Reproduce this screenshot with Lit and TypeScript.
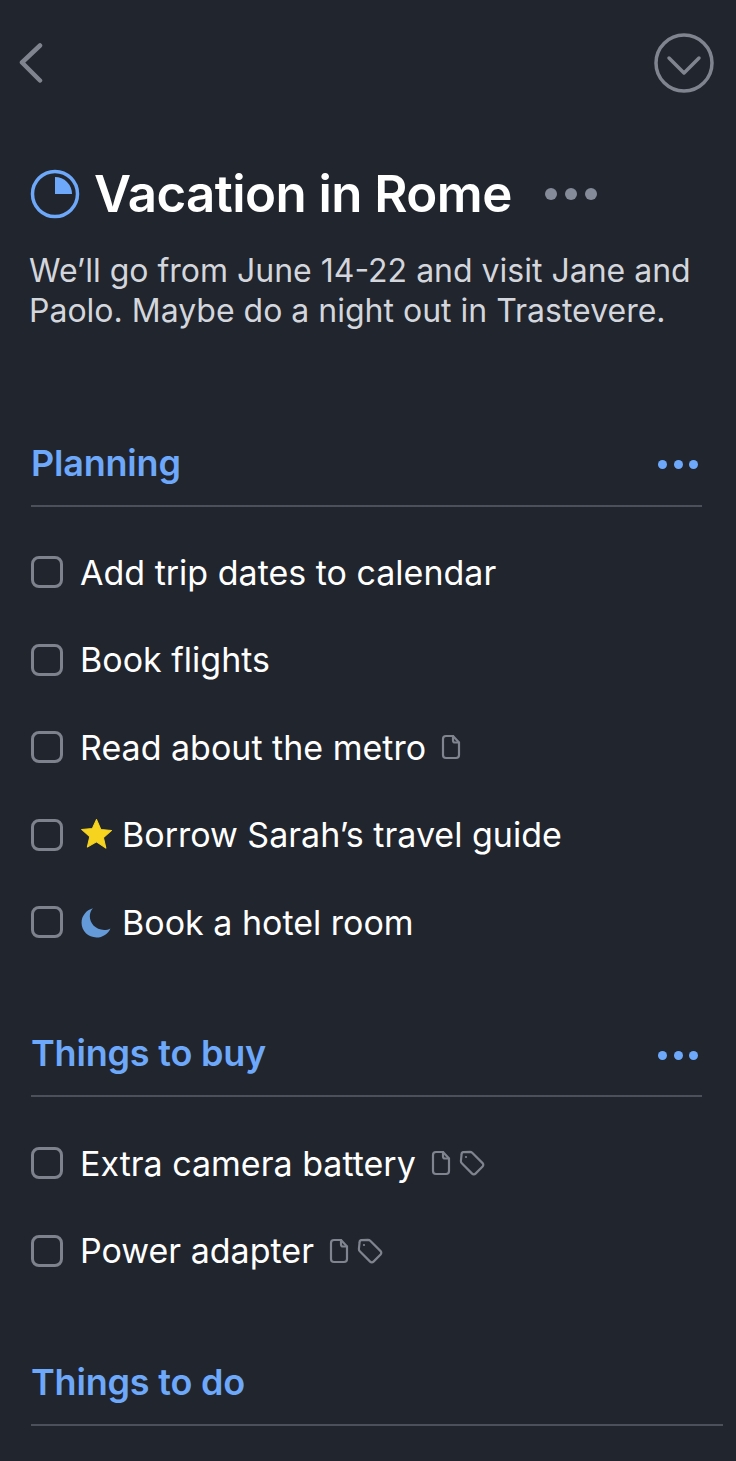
import { LitElement, html, css } from "lit";
import { customElement } from "lit/decorators.js";

const doc = html`<svg class="ic" width="20" height="26" viewBox="0 0 20 26" fill="none" stroke="#80848f" stroke-width="2.200" stroke-linejoin="round" stroke-linecap="round"><path d="M5 2h7l6 6.500V21a3 3 0 0 1-3 3H5a3 3 0 0 1-3-3V5a3 3 0 0 1 3-3z"/><path d="M12 2v4.500a2 2 0 0 0 2 2h4"/></svg>`;
const tag = html`<svg class="ic" width="26" height="26" viewBox="0 0 26 26" fill="none" stroke="#80848f" stroke-width="2.200" stroke-linejoin="round"><path d="M2.600 4.200 A2 2 0 0 1 4.400 2.200 L11 1.800 A3 3 0 0 1 13.200 2.700 L23.600 13.100 A2.400 2.400 0 0 1 23.600 16.500 L16.500 23.600 A2.400 2.400 0 0 1 13.100 23.600 L2.800 13.300 A3 3 0 0 1 1.900 11 Z"/><circle cx="7" cy="7" r="1.100" fill="#80848f" stroke="none"/></svg>`;
const star = html`<svg class="lead" width="33" height="33" viewBox="0 0 32 32"><path fill="#f5d31f" d="M16 1.500l4.200 9.600 10.400 1-7.900 6.900 2.400 10.200L16 23l-8.900 5.200 2.400-10.200-7.900-6.900 10.400-1z" stroke="#f5d31f" stroke-linejoin="round" stroke-width="1"/></svg>`;
const moon = html`<svg class="lead" width="33" height="33" viewBox="0 0 32 32"><path fill="#659ad9" d="M12.500 2.200C6 4 1.500 9.600 1.500 16.300 1.500 24.300 8 30.500 16 30.500c6 0 11.300-3.600 13.500-8.800-1.800 1-3.900 1.500-6 1.500-8.500 0-14-6.500-14-13.200 0-2.800 1-5.600 3-7.800z"/></svg>`;

type Row = { text: string; lead?: unknown; after?: unknown[] };
type Section = { title: string; more: boolean; rows: Row[]; wide?: boolean };

const sections: Section[] = [
  { title: "Planning", more: true, rows: [
    { text: "Add trip dates to calendar" },
    { text: "Book flights" },
    { text: "Read about the metro", after: [doc] },
    { text: "Borrow Sarah’s travel guide", lead: star },
    { text: "Book a hotel room", lead: moon },
  ]},
  { title: "Things to buy", more: true, rows: [
    { text: "Extra camera battery", after: [doc, tag] },
    { text: "Power adapter", after: [doc, tag] },
  ]},
  { title: "Things to do", more: false, rows: [], wide: true },
];

@customElement("app-root")
export class AppRoot extends LitElement {
  static styles = css`
    :host { display: block; height: 1461px; overflow: hidden; background: #21252d; color: #fff; font-family: Inter, "Liberation Sans", sans-serif; }
    .nav { height: 128px; display: flex; justify-content: space-between; align-items: flex-start; padding: 33px 22px 0 18px; box-sizing: border-box; }
    .back { margin-top: 10px; display: block; }
    .title { display: flex; align-items: center; height: 62px; margin-top: 35px; padding-left: 30px; }
    .title h1 { margin: 0 0 0 14px; font-size: 51px; font-weight: 600; letter-spacing: -0.55px; line-height: 62px; }
    .dots { display: flex; gap: 8px; }
    .dots i { display: block; border-radius: 50%; }
    .title .dots { margin-left: 33px; }
    .title .dots i { width: 12px; height: 12px; background: #868b99; }
    .desc { margin: 26px 30px 0 29px; font-size: 32px; line-height: 40px; color: #d3d6dc; width: 690px; }
    .section { margin: 0 34px 0 31px; }
    .section.wide { margin-right: 13px; }
    .head { height: 75px; display: flex; align-items: center; justify-content: space-between; border-bottom: 2px solid #4c505a; box-sizing: border-box; padding: 0 4px 11px 0; }
    .head h2 { margin: 0; font-size: 36px; font-weight: 600; color: #6da8fa; line-height: 44px; letter-spacing: -0.2px; }
    .head .dots { gap: 6.500px; margin-top: 4px; }
    .head .dots i { width: 9px; height: 9px; background: #6da8fa; }
    .rows { padding: 22px 0 0; }
    .row { height: 87.500px; display: flex; align-items: center; font-size: 34px; }
    .box { width: 26px; height: 26px; border: 3px solid #7e828d; border-radius: 8px; flex: none; margin-right: 17px; }
    .lead { margin-right: 9px; flex: none; }
    .ic { flex: none; display: block; }
    .row .text + .ic { margin-left: 15px; }
    .row .ic + .ic { margin-left: 8px; }
  `;
  render() {
    return html`
      <div class="nav">
        <svg class="back" width="28" height="40" viewBox="0 0 28 40" fill="none" stroke="#80848f" stroke-width="4.500" stroke-linecap="round" stroke-linejoin="round"><path d="M22 2.500 L4 19.500 L22 37.500"/></svg>
        <svg width="60" height="60" viewBox="0 0 60 60" fill="none" stroke="#80848f" stroke-width="3.500" stroke-linecap="round" stroke-linejoin="round"><circle cx="30" cy="30" r="28"/><path d="M15 25 L30 40 L45 25"/></svg>
      </div>
      <div class="title">
        <svg width="50" height="50" viewBox="0 0 50 50" fill="none"><circle cx="25" cy="25" r="22.500" stroke="#6da8fa" stroke-width="3.500"/><path d="M25 8 A17 17 0 0 1 42 25 H25Z" fill="#6da8fa"/></svg>
        <h1>Vacation in Rome</h1>
        <div class="dots"><i></i><i></i><i></i></div>
      </div>
      <div class="desc">We’ll go from June 14-22 and visit Jane and Paolo. Maybe do a night out in Trastevere.</div>
      ${sections.map((s, i) => html`
        <div class="section ${s.wide ? "wide" : ""}" style="margin-top:${[100.5, 56.25, 56.75][i]}px">
          <div class="head">
            <h2>${s.title}</h2>
            ${s.more ? html`<div class="dots"><i></i><i></i><i></i></div>` : ""}
          </div>
          ${s.rows.length ? html`<div class="rows">
            ${s.rows.map((r) => html`<div class="row"><div class="box"></div>${r.lead ?? ""}<span class="text">${r.text}</span>${r.after ?? ""}</div>`)}
          </div>` : ""}
        </div>`)}
    `;
  }
}
